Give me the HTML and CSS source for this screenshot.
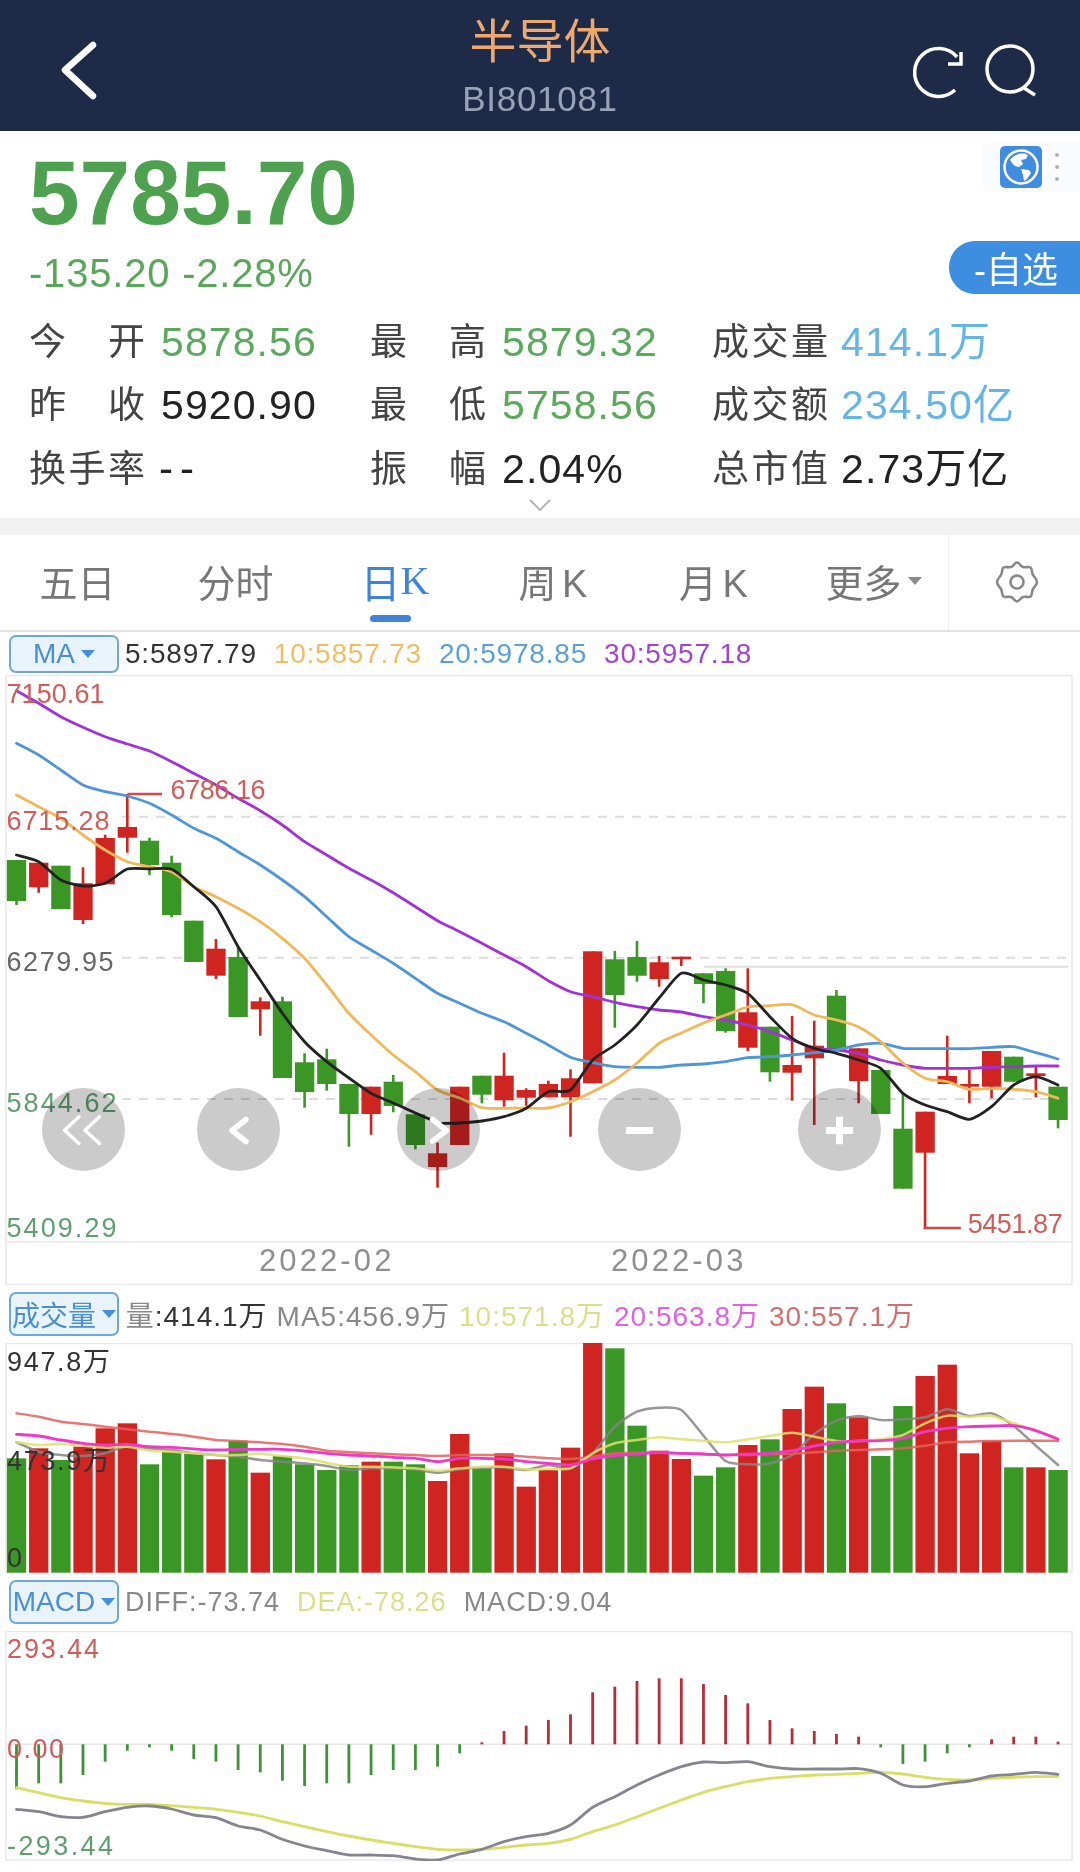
FILE: index.html
```html
<!DOCTYPE html>
<html lang="zh">
<head>
<meta charset="utf-8">
<title>半导体 BI801081</title>
<link rel="stylesheet" href="styles.css">
</head>
<body>
<header class="nav">
  <svg class="nav-icon nav-back" viewBox="0 0 40 60"><path d="M34 5 L6 30 L34 56"/></svg>
  <div class="nav-title">
    <div class="nav-name">半导体</div>
    <div class="nav-code">BI801081</div>
  </div>
  <div class="nav-actions">
    <svg class="nav-icon nav-refresh" viewBox="0 0 54 54"><path d="M43 46 A24 24 0 1 1 45 13"/><path d="M49 8 V20 H36"/></svg>
    <svg class="nav-icon nav-search" viewBox="0 0 54 54"><circle cx="26" cy="25" r="23"/><path d="M40 44 L51 51"/></svg>
  </div>
</header>

<section class="quote">
  <div class="quote-top">
    <div class="quote-main">
      <div class="price">5785.70</div>
      <div class="change">-135.20 -2.28%</div>
    </div>
    <div class="quote-side">
      <div class="globe-box">
        <svg class="globe" viewBox="0 0 42 42">
          <rect width="42" height="42" rx="5" fill="#3f8ce0"/>
          <circle cx="21" cy="21" r="16.5" fill="none" stroke="#fff" stroke-width="2.5"/>
          <path d="M10 14 C14 8 22 6 28 9 L26 13 L21 14 L23 18 L19 21 L15 20 L12 17Z" fill="#fff"/>
          <path d="M21 23 L29 24 L31 27 L27 33 L24 35 L23 29Z" fill="#fff"/>
        </svg>
        <div class="dots"><i></i><i></i><i></i></div>
      </div>
      <div class="watch">-自选</div>
    </div>
  </div>
  <div class="stats">
    <div class="stat"><span class="lab">今 开</span><span class="val green">5878.56</span></div>
    <div class="stat"><span class="lab">最 高</span><span class="val green">5879.32</span></div>
    <div class="stat"><span class="lab">成交量</span><span class="val sky">414.1万</span></div>
    <div class="stat"><span class="lab">昨 收</span><span class="val">5920.90</span></div>
    <div class="stat"><span class="lab">最 低</span><span class="val green">5758.56</span></div>
    <div class="stat"><span class="lab">成交额</span><span class="val sky">234.50亿</span></div>
    <div class="stat"><span class="lab">换手率</span><span class="val dash">--</span></div>
    <div class="stat"><span class="lab">振 幅</span><span class="val">2.04%</span></div>
    <div class="stat"><span class="lab">总市值</span><span class="val">2.73万亿</span></div>
  </div>
  <svg class="expand" viewBox="0 0 22 12"><path d="M1 1 L11 11 L21 1"/></svg>
</section>
<div class="band"></div>

<nav class="tabs">
  <div class="tab">五日</div>
  <div class="tab">分时</div>
  <div class="tab active">日<span class="serif">K</span><i class="tab-bar"></i></div>
  <div class="tab tight">周 K</div>
  <div class="tab tight">月 K</div>
  <div class="tab">更多<i class="tab-caret"></i></div>
  <div class="tab-gear">
    <svg class="gear" viewBox="0 0 44 44">
      <path d="M22 2.5 C24.5 2.5 25 6 28 7 C31 8 33.5 6 35.5 7.5 C37.5 9 36.5 12.5 38 15 C39.5 17.5 42 19 42 22 C42 25 39.5 26.5 38 29 C36.5 31.5 37.5 35 35.5 36.5 C33.5 38 31 36 28 37 C25 38 24.5 41.5 22 41.5 C19.5 41.5 19 38 16 37 C13 36 10.5 38 8.5 36.5 C6.5 35 7.5 31.5 6 29 C4.5 26.5 2 25 2 22 C2 19 4.5 17.5 6 15 C7.5 12.5 6.5 9 8.5 7.5 C10.5 6 13 8 16 7 C19 6 19.5 2.5 22 2.5Z"/>
      <circle cx="22" cy="22" r="6.5"/>
    </svg>
  </div>
</nav>

<div class="legend legend-ma">
  <div class="leg-btn">MA<i class="caret"></i></div>
  <span class="k">5:5897.79</span>
  <span class="c-orange">10:5857.73</span>
  <span class="c-blue">20:5978.85</span>
  <span class="c-purple">30:5957.18</span>
</div>

<div class="chart chart-price">
  <svg id="price" class="plot" viewBox="0 675 1080 610"></svg>
  <div class="zbtn z1"><i class="zdisc"></i><svg class="zicon thin" viewBox="-41.5 -41.5 83 83"><path d="M-4.5 -12.7 L-19 .7 L-4.5 14 M16 -12.7 L1.4 .7 L16 14"/></svg></div>
  <div class="zbtn z2"><i class="zdisc"></i><svg class="zicon" viewBox="-41.5 -41.5 83 83"><path d="M7.5 -10 L-6.5 1 L7.5 12"/></svg></div>
  <div class="zbtn z3"><i class="zdisc"></i><svg class="zicon" viewBox="-41.5 -41.5 83 83"><path d="M-5.9 -10 L7.9 1 L-5.9 11.7"/></svg></div>
  <div class="zbtn z4"><i class="zdisc"></i><svg class="zicon solid" viewBox="-41.5 -41.5 83 83"><path d="M-13.7 1 H13.7"/></svg></div>
  <div class="zbtn z5"><i class="zdisc"></i><svg class="zicon solid" viewBox="-41.5 -41.5 83 83"><path d="M-13.7 1 H13.7 M0 -12.7 V14.7"/></svg></div>
</div>

<div class="legend legend-vol">
  <div class="leg-btn">成交量<i class="caret"></i></div>
  <span class="g">量<span class="k">:414.1万</span></span>
  <span class="g">MA5:456.9万</span>
  <span class="c-lime">10:571.8万</span>
  <span class="c-pink">20:563.8万</span>
  <span class="c-rose">30:557.1万</span>
</div>

<div class="chart chart-vol">
  <svg id="vol" class="plot" viewBox="0 1343 1080 230"></svg>
</div>

<div class="legend legend-macd">
  <div class="leg-btn">MACD<i class="caret"></i></div>
  <span class="g">DIFF:-73.74</span>
  <span class="c-lime">DEA:-78.26</span>
  <span class="g">MACD:9.04</span>
</div>

<div class="chart chart-macd">
  <svg id="macd" class="plot" viewBox="0 1631 1080 230"></svg>
</div>

<script src="chart.js"></script>
</body>
</html>
```

FILE: styles.css
```css
* { box-sizing: border-box; }
html, body { margin: 0; padding: 0; background: #fff; }
body {
  width: 1080px;
  height: 1872px;
  overflow: hidden;
  font-family: "Liberation Sans", "Noto Sans CJK SC", sans-serif;
  color: #333;
}

/* nav */
.nav {
  height: 131px;
  background: #1e2b48;
  display: grid;
  grid-template-columns: 1fr auto 1fr;
  align-items: start;
}
.nav-icon { display: block; fill: none; stroke: #fff; }
.nav-back { width: 40px; height: 60px; margin: 40px 0 0 59px; stroke-width: 6.5; stroke-linecap: round; stroke-linejoin: round; }
.nav-title { text-align: center; padding-top: 14px; }
.nav-name { font-size: 47px; line-height: 56px; color: #efa76b; }
.nav-code { font-size: 35px; line-height: 40px; color: #98a3b8; margin-top: 9px; letter-spacing: .7px; }
.nav-actions { display: flex; justify-content: flex-end; gap: 18px; margin: 44px 42px 0 0; }
.nav-refresh, .nav-search { width: 54px; height: 54px; stroke-width: 3.5; overflow: visible; }

/* quote */
.quote { height: 387px; }
.quote-top { display: flex; justify-content: space-between; padding-left: 29px; }
.price { font-size: 91px; line-height: 88px; font-weight: 700; color: #4ea24f; margin-top: 18px; }
.change { font-size: 40px; line-height: 44px; color: #5aa75a; margin-top: 14px; letter-spacing: .8px; }
.quote-side { display: flex; flex-direction: column; align-items: flex-end; padding-top: 11px; }
.globe-box {
  width: 99px; height: 50px;
  background: #fafbfc;
  border-radius: 10px 0 0 10px;
  display: flex; align-items: center; padding-left: 19px; gap: 13px;
}
.globe { width: 42px; height: 42px; display: block; }
.dots { display: flex; flex-direction: column; gap: 8px; }
.dots i { width: 4px; height: 4px; background: #b0b0b0; border-radius: 50%; display: block; }
.watch {
  margin-top: 49px;
  width: 131px; height: 53px;
  background: #3d8de0;
  color: #fff;
  font-size: 36px;
  line-height: 59px;
  padding-left: 25px;
  border-radius: 26px 0 0 26px;
}
.stats {
  display: grid;
  grid-template-columns: 341px 343px 1fr;
  grid-auto-rows: 63.5px;
  padding-left: 29px;
  margin-top: 15px;
}
.stat { display: flex; align-items: center; }
.stat:nth-child(3n) { margin-left: -1px; }
.stat:nth-child(3n) .lab { margin-right: 13px; }
.lab {
  width: 116px; margin-right: 16px; padding-top: 2px;
  font-size: 37px; line-height: 44px;
  color: #444;
  text-align: justify; text-align-last: justify;
}
.val { font-size: 41px; line-height: 44px; color: #222; letter-spacing: 1.1px; }
.val.dash { letter-spacing: 7px; margin-left: -2px; font-size: 42px; }
.green { color: #5aa95d; }
.sky { color: #63b5e6; }
.expand { display: block; width: 22px; height: 12px; margin: -2px auto 0; fill: none; stroke: #b5b5b5; stroke-width: 2; }
.band { height: 17px; background: #f2f2f2; }

/* tabs */
.tabs {
  height: 97px;
  display: flex;
  border-bottom: 2px solid #e2e2e2;
  position: relative;
}
.tab {
  width: 158px;
  height: 95px;
  display: flex; align-items: center; justify-content: center;
  padding: 0 3px 4px 0;
  font-size: 38px;
  color: #777;
  position: relative;
}
.tab.tight { word-spacing: -5px; padding-right: 0; }
.tab.tight + .tab.tight { padding-left: 5px; }
.tab.active { color: #3f83d6; font-size: 40px; padding-right: 0; }
.serif { font-family: "Liberation Serif", serif; }
.tab-bar { position: absolute; left: 54px; width: 41px; height: 7px; bottom: 8px; border-radius: 4px; background: #3f83d6; }
.tab-caret { width: 0; height: 0; border: 7px solid transparent; border-top: 8px solid #8a8a8a; border-bottom: 0; margin-left: 6px; margin-right: -12px; }
.tab-gear {
  flex: 1;
  border-left: 1px solid #eee;
  display: flex; align-items: center; justify-content: center;
  padding: 0 0 1px 4px;
}
.gear { width: 44px; height: 44px; fill: none; stroke: #888; stroke-width: 2.6; }

/* legends */
.legend { display: flex; align-items: center; padding-left: 9px; }
.legend-ma { height: 43px; gap: 17px; font-size: 28px; letter-spacing: .8px; }
.legend-vol { height: 58px; gap: 9px; font-size: 28px; letter-spacing: 1px; }
.legend-macd { height: 58px; gap: 17px; font-size: 27px; letter-spacing: 1px; }
.leg-btn {
  width: 110px; height: 40px;
  border: 2px solid #6fa7d6;
  border-radius: 7px;
  background: #e9f3fb;
  color: #4a8fd0;
  font-size: 28px;
  letter-spacing: 0;
  display: flex; align-items: center; justify-content: center;
}
.legend-ma .leg-btn { height: 38px; margin-right: -11px; }
.legend-vol .leg-btn { height: 44px; margin-right: -2.3px; }
.legend-macd .leg-btn { height: 44px; margin-right: -11px; }
.caret { width: 0; height: 0; border: 7px solid transparent; border-top: 8px solid #3f8fe0; border-bottom: 0; margin-left: 6px; }
.k { color: #333; }
.g { color: #888; }
.c-orange { color: #efbe62; }
.c-blue { color: #5a9fd8; }
.c-purple { color: #a045cf; }
.c-lime { color: #d9e08c; }
.c-pink { color: #e060e0; }
.c-rose { color: #d07070; }

/* charts */
.chart { position: relative; width: 1080px; overflow: hidden; }
.chart-price { height: 610px; }
.chart-vol { height: 230px; }
.chart-macd { height: 230px; }
.plot { display: block; width: 1080px; height: 100%; }
.frame { fill: none; stroke: #e8e8e8; stroke-width: 1.5; }
.grid { stroke: #dcdcdc; stroke-width: 2; stroke-dasharray: 9 8; fill: none; }
.rule { stroke: #dedede; stroke-width: 2; fill: none; }
.zero { stroke: #e6e6e6; stroke-width: 1.5; fill: none; }
.ma { fill: none; stroke-width: 2.8; stroke-linejoin: round; stroke-linecap: round; }
.ma-thin { stroke-width: 2.5; stroke-opacity: .85; }
.axis { font-size: 27px; }
.date { font-size: 31px; letter-spacing: 3.1px; fill: #8f8f8f; }
.t-red { fill: #cf5d5a; }
.t-green { fill: #5f9f6f; }
.t-grey { fill: #666; }
.t-dark { fill: #333; }
.callout { fill: none; stroke: #cf4a48; stroke-width: 2.6; }

/* overlay buttons */
.zbtn { position: absolute; top: 413px; width: 83px; height: 83px; }
.z1 { left: 41.5px; }
.z2 { left: 196.5px; }
.z3 { left: 396.5px; }
.z4 { left: 597.5px; }
.z5 { left: 797.5px; }
.zdisc { position: absolute; inset: 0; border-radius: 50%; background: #cbcbcb; mix-blend-mode: multiply; display: block; }
.zicon { position: absolute; inset: 0; width: 83px; height: 83px; fill: none; stroke: #fff; stroke-width: 5.5; stroke-linejoin: round; stroke-linecap: round; }
.zicon.thin { stroke-width: 3.5; }
.zicon.solid { stroke-width: 7; stroke-linecap: butt; }
```

FILE: chart.js
```js
(function () {
  var NS = 'http://www.w3.org/2000/svg';
  var RED = '#cf2420', GREEN = '#3a9725';
  function cx(i) { return 16.5 + 22.16 * i; }
  function el(parent, name, attrs, text) {
    var n = document.createElementNS(NS, name);
    for (var k in attrs) n.setAttribute(k, attrs[k]);
    if (text !== undefined) n.textContent = text;
    parent.appendChild(n);
    return n;
  }
  // Catmull-Rom curve through the points, for the moving-average lines
  function curve(pts) {
    var d = 'M' + pts[0][0].toFixed(1) + ' ' + pts[0][1].toFixed(1);
    for (var i = 0; i < pts.length - 1; i++) {
      var p0 = pts[i - 1] || pts[i], p1 = pts[i], p2 = pts[i + 1], p3 = pts[i + 2] || p2;
      var k = 0.12;
      d += ' C' + (p1[0] + (p2[0] - p0[0]) * k).toFixed(1) + ' ' + (p1[1] + (p2[1] - p0[1]) * k).toFixed(1) +
           ' ' + (p2[0] - (p3[0] - p1[0]) * k).toFixed(1) + ' ' + (p2[1] - (p3[1] - p1[1]) * k).toFixed(1) +
           ' ' + p2[0].toFixed(1) + ' ' + p2[1].toFixed(1);
    }
    return d;
  }
  function line(parent, ys, color, cls, start) {
    var pts = ys.map(function (y, i) { return [cx(i + (start || 0)), y]; });
    el(parent, 'path', { d: curve(pts), stroke: color, 'class': cls || 'ma' });
  }
  // len: the width the label takes in the reference
  function label(parent, x, y, cls, s, len) {
    var attrs = { x: x, y: y, 'class': cls };
    if (len) { attrs.textLength = len; attrs.lengthAdjust = 'spacing'; }
    el(parent, 'text', attrs, s);
  }

  /* ---------- price panel ---------- */
  var p = document.getElementById('price');
  el(p, 'rect', { x: 6, y: 675.5, width: 1066, height: 609, 'class': 'frame' });
  el(p, 'path', { d: 'M6 1241.7 H1072', 'class': 'frame' });
  [816.7, 957.7, 1099].forEach(function (y) {
    el(p, 'path', { d: 'M122 ' + y + ' H1072', 'class': 'grid' });
  });
  el(p, 'path', { d: 'M704 966.7 H1068', 'class': 'rule' });

  // [colour, wickTop, bodyTop, bodyBottom, wickBottom]
  var c = [
    [0, 860, 860, 901, 905], [1, 862.7, 862.7, 887.3, 892.7], [0, 865.7, 865.7, 909, 909],
    [1, 867.3, 883.3, 920, 924], [1, 834.7, 838, 884.3, 884.3], [1, 794, 827, 837.7, 852.7],
    [0, 837.7, 840.7, 865, 875], [0, 855.7, 862.7, 915, 917.3], [0, 920.7, 920.7, 962, 962],
    [1, 939, 948.7, 975.7, 979], [0, 946.7, 957, 1017, 1017], [1, 997.3, 1001.3, 1009.3, 1035.7],
    [0, 996.7, 1001.3, 1078, 1078], [0, 1053.3, 1062.3, 1092, 1107.7], [0, 1048.7, 1059.3, 1084, 1090.7],
    [0, 1084, 1084, 1114, 1146.7], [1, 1086.7, 1086.7, 1114, 1134.7], [0, 1075, 1081.7, 1106, 1112.3],
    [0, 1114.3, 1114.3, 1145, 1149.3], [1, 1142.7, 1153.3, 1167, 1187.7], [1, 1086.7, 1086.7, 1145, 1145],
    [0, 1075.7, 1075.7, 1094.7, 1103.3], [1, 1052.7, 1075.7, 1100.3, 1106.7], [1, 1088.3, 1090, 1097.7, 1105.7],
    [1, 1080.7, 1084, 1097.3, 1097.3], [1, 1069.3, 1078.3, 1097.3, 1136.7], [1, 951.3, 951.3, 1083.3, 1083.3],
    [0, 951, 959.3, 995, 1027.7], [0, 941, 957, 975.7, 981.7], [1, 956, 962.3, 979, 986.7],
    [1, 956.7, 956.7, 959.3, 966], [0, 973.3, 973.3, 984, 1003.3], [0, 968.3, 971, 1031, 1032.7],
    [1, 968.3, 1012.3, 1047.7, 1051], [0, 1026.7, 1026.7, 1072.3, 1081.7], [1, 1016, 1065, 1072.7, 1100.7],
    [1, 1020.7, 1045.7, 1058.3, 1125], [0, 990, 995.7, 1050, 1050], [1, 1048.3, 1048.3, 1081, 1103.3],
    [0, 1070, 1070, 1114, 1114], [0, 1093.3, 1128.7, 1188.7, 1188.7], [1, 1111.7, 1111.7, 1152.7, 1227.7],
    [1, 1035.7, 1076, 1084, 1084], [1, 1070, 1084, 1086.7, 1103.3], [1, 1051, 1051, 1086.7, 1098.3],
    [0, 1056.7, 1056.7, 1081.7, 1081.7], [1, 1066.7, 1073.3, 1076, 1097.3], [0, 1086.7, 1086.7, 1120, 1128.3]
  ];
  c.forEach(function (d, i) {
    var col = d[0] ? RED : GREEN, x = cx(i);
    el(p, 'rect', { x: x - 1.3, y: d[1], width: 2.6, height: d[4] - d[1], fill: col });
    el(p, 'rect', { x: x - 9.6, y: d[2], width: 19.3, height: Math.max(d[3] - d[2], 2), fill: col });
  });

  function z3(a) { return a.map(function (z) { return 670 + z / 3; }); }
  var ma30 = z3([62, 100, 140, 172, 200, 222, 243, 275, 310, 345, 385, 422, 465, 515, 555, 595, 630, 668, 710, 752, 785, 820, 855, 890, 932, 965, 980, 997, 1010, 1020, 1026, 1040, 1050, 1065, 1085, 1110, 1135, 1140, 1150, 1170, 1185, 1195, 1195, 1195, 1192, 1190, 1188, 1188]);
  var ma20 = z3([220, 255, 300, 345, 365, 378, 400, 435, 475, 505, 545, 585, 630, 680, 740, 800, 840, 880, 925, 970, 1000, 1030, 1055, 1090, 1125, 1162, 1178, 1190, 1192, 1192, 1185, 1182, 1175, 1163, 1160, 1155, 1148, 1140, 1125, 1120, 1135, 1136, 1136, 1136, 1132, 1130, 1148, 1167]);
  var ma10 = z3([375, 410, 445, 495, 540, 575, 590, 605, 650, 680, 715, 755, 805, 865, 945, 1030, 1095, 1155, 1205]).concat([1090, 1098, 1107.7, 1108.3, 1108, 1108, 1101.7, 1091.7, 1080, 1063, 1043.3, 1033, 1023, 1015, 1007, 1005.7, 1004.7, 1015, 1020, 1027, 1041.7, 1063, 1078.3, 1081.7, 1089.3, 1088.3, 1089.3, 1091.7, 1098.3]);
  var ma5a = [855, 861.7, 880, 886, 883.3, 869, 869, 869.3, 886.7, 906.7, 946.7, 980, 1013.3, 1041.7, 1061.7, 1078, 1093.3, 1103, 1113];
  var ma5b = [1123, 1121, 1116.7, 1108.3, 1091.7, 1090, 1060, 1045, 1025, 998, 973.3, 980, 985, 993.3, 1016.7, 1038.3, 1048.3, 1053.3, 1060, 1068.3, 1093.3, 1105, 1111.7, 1119.3, 1106.7, 1085, 1076.7, 1085];
  line(p, ma30, '#a332d6');
  line(p, ma20, '#4f96d8');
  line(p, ma10, '#f2b858');
  var leftPts = ma5a.map(function (y, i) { return [cx(i), y]; }).concat([[430, 1119.3]]);
  var rightPts = [[442.5, 1123.3]].concat(ma5b.map(function (y, i) { return [cx(i + 20), y]; }));
  el(p, 'path', { d: curve(leftPts), stroke: '#222', 'class': 'ma' });
  el(p, 'path', { d: curve(rightPts), stroke: '#222', 'class': 'ma' });

  el(p, 'path', { d: 'M127.5 794 H162', 'class': 'callout' });
  el(p, 'path', { d: 'M924.6 1227.7 V1228 H960.8', 'class': 'callout' });
  label(p, 6.5, 703.3, 'axis t-red', '7150.61', 98);
  label(p, 6.5, 830, 'axis t-red', '6715.28', 103);
  label(p, 6.5, 971, 'axis t-grey', '6279.95', 107);
  label(p, 6.5, 1112.3, 'axis t-green', '5844.62', 110);
  label(p, 6.5, 1236.7, 'axis t-green', '5409.29', 110);
  label(p, 170.5, 799.3, 'axis t-red', '6786.16', 95);
  label(p, 967.7, 1233.3, 'axis t-red', '5451.87', 95);
  label(p, 259, 1270.7, 'date', '2022-02');
  label(p, 611, 1270.7, 'date', '2022-03');

  /* ---------- volume panel ---------- */
  var v = document.getElementById('vol');
  el(v, 'rect', { x: 6, y: 1343.5, width: 1066, height: 230, 'class': 'frame' });
  function zv(a) { return a.map(function (z) { return 1280 + z / 3; }); }
  var tops = [535, 505, 540, 500, 445, 430, 553, 515, 522, 538, 482, 578, 528, 553, 570, 555, 545, 545, 553, 603, 462, 565, 520, 620,
              570, 503, 188, 205, 437, 512, 537, 587, 562, 495, 478, 387, 320, 370, 412, 528, 378, 288, 254, 520, 482, 562, 562, 570];
  var vcol = [0, 1, 0, 1, 1, 1, 0, 0, 0, 1, 0, 1, 0, 0, 0, 0, 1, 0, 0, 1, 1, 0, 1, 1,
              1, 1, 1, 0, 0, 1, 1, 0, 0, 1, 0, 1, 1, 0, 1, 0, 0, 1, 1, 1, 1, 0, 1, 0];
  zv(tops).forEach(function (y, i) {
    el(v, 'rect', { x: cx(i) - 9.6, y: y, width: 19.3, height: 1572.7 - y, fill: vcol[i] ? RED : GREEN });
  });
  var v30 = [400, 410, 425, 432, 440, 448, 455, 462, 470, 480, 483, 487, 492, 500, 512, 516, 520, 523, 525, 528, 525, 525, 525, 530, 535, 537, 530, 520, 518, 518, 520, 522, 525, 525, 522, 522, 517, 512, 510, 508, 505, 497, 487, 485, 483, 482, 482, 482];
  var v20 = [463, 468, 480, 490, 495, 493, 500, 502, 507, 510, 508, 508, 508, 513, 520, 525, 528, 532, 535, 545, 535, 535, 537, 545, 550, 555, 537, 527, 522, 518, 520, 522, 525, 522, 520, 512, 498, 487, 483, 482, 475, 455, 445, 440, 438, 437, 452, 478];
  var v10 = [487, 495, 492, 497, 503, 500, 512, 515, 520, 525, 525, 522, 528, 535, 548, 560, 560, 562, 565, 572, 565, 560, 560, 568, 567, 565, 520, 490, 480, 472, 478, 482, 487, 478, 468, 458, 470, 483, 483, 478, 465, 430, 407, 410, 408, 430, 452, 475];
  var v5 = [487, 515, 525, 528, 520, 497, 505, 510, 520, 525, 530, 540, 545, 550, 558, 570, 565, 565, 568, 578, 568, 563, 562, 570, 555, 565, 520, 440, 395, 383, 390, 467, 543, 553, 550, 525, 462, 422, 408, 420, 418, 412, 388, 408, 400, 438, 497, 555];
  line(v, zv(v5), '#858585', 'ma ma-thin');
  line(v, zv(v30), '#e4605c', 'ma ma-thin');
  line(v, zv(v10), '#dfe06a', 'ma ma-thin');
  line(v, zv(v20), '#f038c8', 'ma');
  label(v, 7, 1370.7, 'axis t-dark', '947.8万', 103);
  label(v, 7, 1470, 'axis t-dark', '473.9万', 103);
  label(v, 7, 1567.3, 'axis t-dark', '0');

  /* ---------- MACD panel ---------- */
  var m = document.getElementById('macd');
  el(m, 'rect', { x: 6, y: 1631.5, width: 1066, height: 228.5, 'class': 'frame' });
  el(m, 'path', { d: 'M6 1744.3 H1072', 'class': 'zero' });
  function zm(a) { return a.map(function (z) { return 1570 + z / 3; }); }
  var h = [658, 640, 640, 615, 575, 542, 532, 542, 567, 575, 600, 607, 632, 648, 640, 640, 615, 600, 600, 590, 550, 517, 483, 467,
           450, 433, 367, 350, 333, 325, 325, 342, 375, 400, 450, 475, 483, 492, 500, 532, 582, 575, 550, 532, 508, 500, 500, 515];
  zm(h).forEach(function (y, i) {
    var up = y < 1744.3;
    el(m, 'rect', {
      x: cx(i) - 1.4, y: up ? y : 1744.3, width: 2.8, height: Math.abs(y - 1744.3),
      fill: up ? '#b82b38' : '#3f9238'
    });
  });
  var dea = [653, 668, 683, 693, 700, 703, 703, 707, 712, 718, 727, 738, 755, 770, 785, 798, 810, 820, 830, 838, 840, 838, 832, 825, 820, 808, 785, 765, 740, 715, 690, 667, 650, 635, 625, 620, 615, 613, 610, 607, 612, 622, 628, 630, 625, 622, 620, 620];
  var diff = [718, 725, 740, 742, 725, 712, 708, 717, 735, 743, 768, 780, 808, 828, 842, 855, 855, 857, 867, 870, 852, 838, 815, 800, 790, 765, 712, 680, 645, 615, 590, 576, 578, 575, 590, 597, 597, 597, 596, 610, 645, 650, 640, 633, 618, 613, 607, 613];
  line(m, zm(dea), '#d9df64');
  line(m, zm(diff), '#85858f');
  label(m, 7, 1657.7, 'axis t-red', '293.44', 92);
  label(m, 7, 1758.3, 'axis t-red', '0.00', 57);
  label(m, 7, 1855, 'axis t-green', '-293.44', 106);
})();
```
